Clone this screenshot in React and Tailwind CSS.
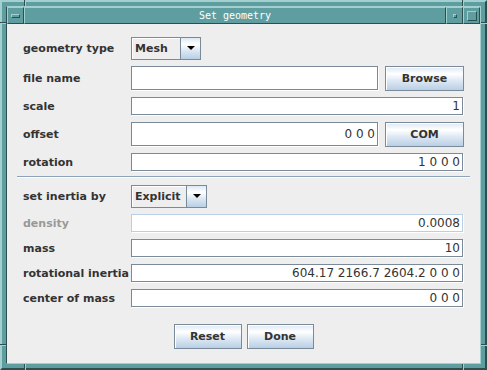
const GRAD = "bg-[linear-gradient(to_bottom,#dde8f3_0%,#ffffff_30%,#dde8f3_60%,#b8cfe5_100%)]";

function Label({ children, disabled }) {
  return (
    <div
      className={
        disabled
          ? "w-[108px] shrink-0 text-[11px] font-bold text-[#999999] leading-none"
          : "w-[108px] shrink-0 text-[11px] font-bold text-[#333333] leading-none"
      }
    >
      {children}
    </div>
  );
}

function Field({ value, tall, disabled }) {
  const base =
    "flex-1 self-start mr-[1px] bg-white border shadow-[1px_1px_0_#ffffff] flex items-center justify-end pr-[2px] text-[12px] text-[#333333] leading-none";
  const h = tall ? " h-[24px]" : " h-[18px]";
  const b = disabled ? " border-[#b8cfe5]" : " border-[#7a8a99]";
  return <div className={base + h + b}>{value}</div>;
}

function Button({ children, w }) {
  return (
    <div
      className={
        "h-[25px] shrink-0 border border-[#7a8a99] shadow-[inset_1px_1px_0_#ffffff] flex items-center justify-center text-[11px] font-bold text-[#333333] leading-none " +
        GRAD +
        " " +
        w
      }
    >
      {children}
    </div>
  );
}

function Combo({ text, w }) {
  return (
    <div className={"h-[23px] flex border border-[#7a8a99] bg-[#eeeeee] " + w}>
      <div className="flex-1 flex items-center pl-[3px] text-[11px] font-bold text-[#333333] leading-none shadow-[inset_1px_1px_0_#ffffff]">
        {text}
      </div>
      <div className={"w-[20px] border-l border-[#7a8a99] flex items-center justify-center " + GRAD}>
        <svg width="8" height="4" viewBox="0 0 8 4">
          <path d="M0 0H8L4 4Z" fill="#000000" />
        </svg>
      </div>
    </div>
  );
}

function Row({ h, children }) {
  return <div className={"flex items-center " + h}>{children}</div>;
}

function Bevel({ className, children }) {
  return (
    <div
      className={
        "h-full border border-t-[#a4cfcf] border-l-[#a4cfcf] border-r-[#2f4f4f] border-b-[#2f4f4f] " +
        className
      }
    >
      {children}
    </div>
  );
}

export default function App() {
  return (
    <div className="relative w-[487px] h-[370px] bg-[#5f9ea0] border-2 border-t-[#a4cfcf] border-l-[#a4cfcf] border-r-[#2f4f4f] border-b-[#2f4f4f] p-[4px] font-['DejaVu_Sans',sans-serif]">
      {/* corner notches */}
      <div className="absolute left-[22px] top-[-2px] w-[1px] h-[6px] bg-[#2f4f4f]" />
      <div className="absolute left-[23px] top-[-2px] w-[1px] h-[6px] bg-[#a4cfcf]" />
      <div className="absolute left-[460px] top-[-2px] w-[1px] h-[6px] bg-[#2f4f4f]" />
      <div className="absolute left-[461px] top-[-2px] w-[1px] h-[6px] bg-[#a4cfcf]" />
      <div className="absolute left-[22px] bottom-[-2px] w-[1px] h-[6px] bg-[#2f4f4f]" />
      <div className="absolute left-[23px] bottom-[-2px] w-[1px] h-[6px] bg-[#a4cfcf]" />
      <div className="absolute left-[460px] bottom-[-2px] w-[1px] h-[6px] bg-[#2f4f4f]" />
      <div className="absolute left-[461px] bottom-[-2px] w-[1px] h-[6px] bg-[#a4cfcf]" />
      <div className="absolute left-[-2px] top-[20px] h-[1px] w-[6px] bg-[#2f4f4f]" />
      <div className="absolute left-[-2px] top-[21px] h-[1px] w-[6px] bg-[#a4cfcf]" />
      <div className="absolute right-[-2px] top-[20px] h-[1px] w-[6px] bg-[#2f4f4f]" />
      <div className="absolute right-[-2px] top-[21px] h-[1px] w-[6px] bg-[#a4cfcf]" />
      <div className="absolute left-[-2px] top-[342px] h-[1px] w-[6px] bg-[#2f4f4f]" />
      <div className="absolute left-[-2px] top-[343px] h-[1px] w-[6px] bg-[#a4cfcf]" />
      <div className="absolute right-[-2px] top-[342px] h-[1px] w-[6px] bg-[#2f4f4f]" />
      <div className="absolute right-[-2px] top-[343px] h-[1px] w-[6px] bg-[#a4cfcf]" />

      <div className="w-full h-full flex flex-col border border-t-[#a4cfcf] border-l-[#2f4f4f] border-r-[#a4cfcf] border-b-[#a4cfcf]">
        {/* title bar */}
        <div className="h-[17px] flex shrink-0">
          <Bevel className="w-[17px] flex items-center justify-center">
            <div className="w-[9px] h-[4px] border border-t-[#a4cfcf] border-l-[#a4cfcf] border-r-[#2f4f4f] border-b-[#2f4f4f]" />
          </Bevel>
          <Bevel className="flex-1 flex items-center justify-center">
            <span className="font-['DejaVu_Sans_Mono',monospace] text-[10px] text-white leading-none">
              Set geometry
            </span>
          </Bevel>
          <Bevel className="w-[17px] flex items-center justify-center">
            <div className="w-[4px] h-[4px] border border-t-[#a4cfcf] border-l-[#a4cfcf] border-r-[#2f4f4f] border-b-[#2f4f4f]" />
          </Bevel>
          <Bevel className="w-[17px] flex items-center justify-center">
            <div className="w-[10px] h-[10px] border border-t-[#a4cfcf] border-l-[#a4cfcf] border-r-[#2f4f4f] border-b-[#2f4f4f]" />
          </Bevel>
        </div>

        {/* content */}
        <div className="flex-1 bg-[#eeeeee] pt-[12px] px-[16px] flex flex-col gap-[6px]">
          <Row h="h-[24px]">
            <Label>geometry type</Label>
            <Combo text="Mesh" w="w-[70px]" />
          </Row>
          <Row h="h-[25px]">
            <Label>file name</Label>
            <div className="flex-1 flex items-start gap-[6px] h-full">
              <Field value="" tall />
              <Button w="w-[79px]">Browse</Button>
            </div>
          </Row>
          <Row h="h-[19px]">
            <Label>scale</Label>
            <Field value="1" />
          </Row>
          <Row h="h-[25px]">
            <Label>offset</Label>
            <div className="flex-1 flex items-start gap-[6px] h-full">
              <Field value="0 0 0" tall />
              <Button w="w-[79px]">COM</Button>
            </div>
          </Row>
          <Row h="h-[19px]">
            <Label>rotation</Label>
            <Field value="1 0 0 0" />
          </Row>
          <div className="mx-[-6px] mt-[-2px] h-[2px] border-t border-t-[#8da2bb] border-b border-b-white" />
          <Row h="h-[24px]">
            <Label>set inertia by</Label>
            <Combo text="Explicit" w="w-[76px]" />
          </Row>
          <Row h="h-[19px]">
            <Label disabled>density</Label>
            <Field value="0.0008" disabled />
          </Row>
          <Row h="h-[19px]">
            <Label>mass</Label>
            <Field value="10" />
          </Row>
          <Row h="h-[19px]">
            <Label>rotational inertia</Label>
            <Field value="604.17 2166.7 2604.2 0 0 0" />
          </Row>
          <Row h="h-[19px]">
            <Label>center of mass</Label>
            <Field value="0 0 0" />
          </Row>
          <div className="mt-[10px] flex justify-center gap-[5px]">
            <Button w="w-[68px]">Reset</Button>
            <Button w="w-[67px]">Done</Button>
          </div>
        </div>
      </div>
    </div>
  );
}
